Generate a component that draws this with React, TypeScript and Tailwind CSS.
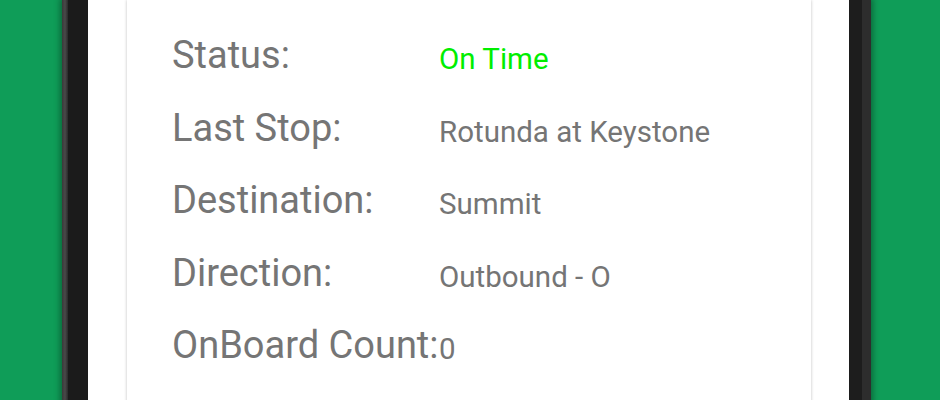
import React from "react";

const rows: { label: string; value: string; green?: boolean }[] = [
  { label: "Status:", value: "On Time", green: true },
  { label: "Last Stop:", value: "Rotunda at Keystone" },
  { label: "Destination:", value: "Summit" },
  { label: "Direction:", value: "Outbound - O" },
  { label: "OnBoard Count:", value: "0" },
];

export default function App() {
  return (
    <div className="h-[400px] w-[940px] overflow-hidden bg-[#0f9d58] flex font-['Roboto',sans-serif]">
      <div className="ml-[62px] flex h-[440px] shrink-0 shadow-[0_0_6px_2px_rgba(0,0,0,0.35)]">
        <div className="w-[6px] bg-[linear-gradient(to_right,#3a3a3a,#4a4a4a,#2a2a2a)]" />
        <div className="w-[20px] bg-[#1b1b1b]" />
        <div className="w-[761px] bg-white pl-[39px]">
          <div className="w-[684px] h-full bg-white shadow-[0_0_3px_rgba(0,0,0,0.25)] pl-[45px] pt-[33px] flex flex-col gap-[28.5px]">
            {rows.map((r) => (
              <div key={r.label} className="flex items-end">
                <div className="min-w-[267px] shrink-0 whitespace-nowrap text-[38px] leading-[44px] text-[#757575]">
                  {r.label}
                </div>
                <div
                  className={
                    r.green
                      ? "whitespace-nowrap text-[29.5px] leading-[35px] text-[#00ee00]"
                      : "whitespace-nowrap text-[29.5px] leading-[35px] text-[#757575]"
                  }
                >
                  {r.value}
                </div>
              </div>
            ))}
          </div>
        </div>
        <div className="w-[13px] bg-[#1d1d1d]" />
        <div className="w-[9px] bg-[#2d2d2d]" />
      </div>
    </div>
  );
}
